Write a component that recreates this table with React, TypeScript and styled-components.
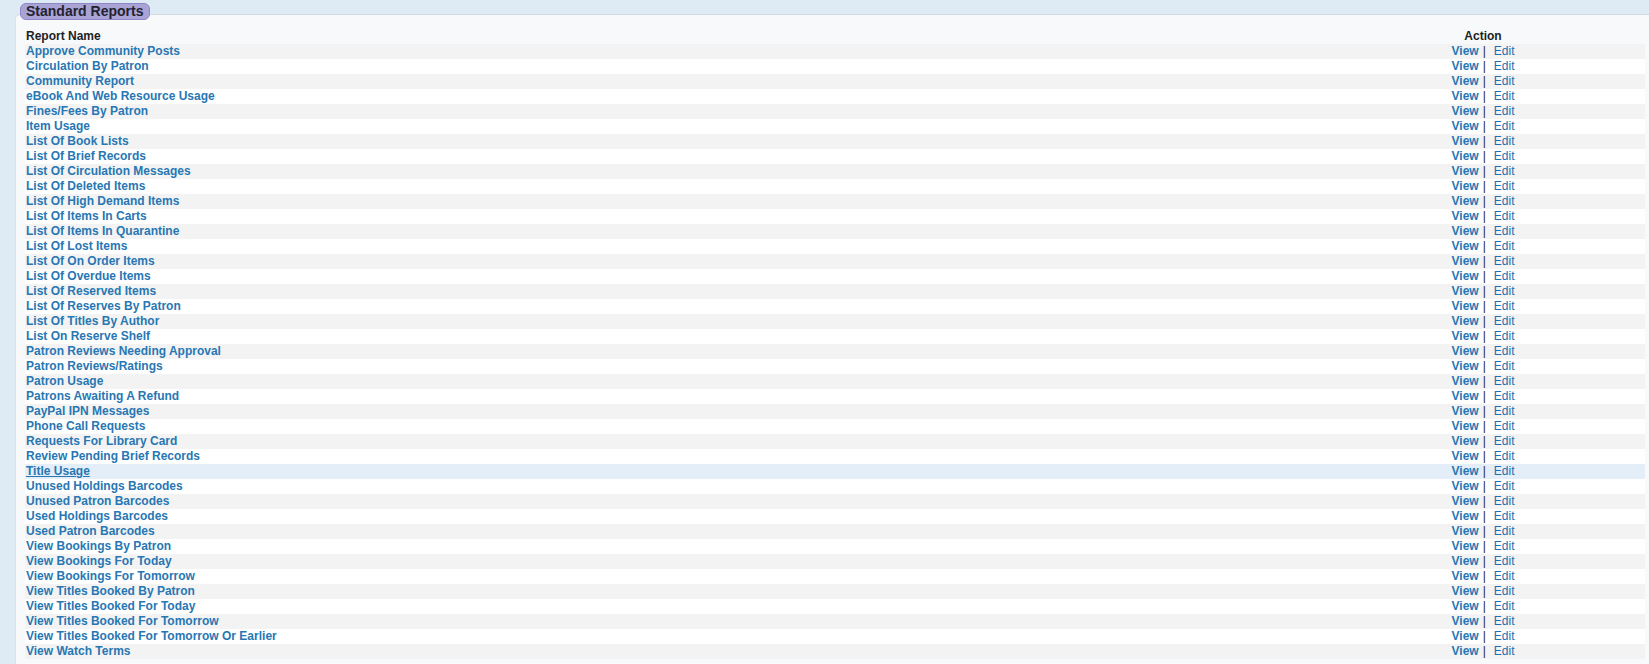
import styled, {createGlobalStyle} from "styled-components";

const GlobalStyle = createGlobalStyle`
  html, body {
    margin: 0;
    padding: 0;
    background: #deeaf4;
    font-family: "Liberation Sans", Arial, sans-serif;
    overflow: hidden;
  }
`

const reports = [
    "Approve Community Posts",
    "Circulation By Patron",
    "Community Report",
    "eBook And Web Resource Usage",
    "Fines/Fees By Patron",
    "Item Usage",
    "List Of Book Lists",
    "List Of Brief Records",
    "List Of Circulation Messages",
    "List Of Deleted Items",
    "List Of High Demand Items",
    "List Of Items In Carts",
    "List Of Items In Quarantine",
    "List Of Lost Items",
    "List Of On Order Items",
    "List Of Overdue Items",
    "List Of Reserved Items",
    "List Of Reserves By Patron",
    "List Of Titles By Author",
    "List On Reserve Shelf",
    "Patron Reviews Needing Approval",
    "Patron Reviews/Ratings",
    "Patron Usage",
    "Patrons Awaiting A Refund",
    "PayPal IPN Messages",
    "Phone Call Requests",
    "Requests For Library Card",
    "Review Pending Brief Records",
    "Title Usage",
    "Unused Holdings Barcodes",
    "Unused Patron Barcodes",
    "Used Holdings Barcodes",
    "Used Patron Barcodes",
    "View Bookings By Patron",
    "View Bookings For Today",
    "View Bookings For Tomorrow",
    "View Titles Booked By Patron",
    "View Titles Booked For Today",
    "View Titles Booked For Tomorrow",
    "View Titles Booked For Tomorrow Or Earlier",
    "View Watch Terms",
]

const Page = styled.div`
  padding: 3px 0 0 15px;
`
const Panel = styled.section`
  margin-top: 11px;
  min-height: 660px;
  box-sizing: border-box;
  background: #f7f9fb;
  border-top: 1px solid #d2d9e1;
  border-left: 1px solid #d9e1e9;
  border-top-left-radius: 5px;
  padding: 0 4px;
`
const Legend = styled.div`
  display: block;
  width: fit-content;
  margin-top: -12px;
  height: 17px;
  box-sizing: border-box;
  padding: 0 6px 0 5px;
  background: #a9a3d6;
  border: 1px solid #8d87c6;
  border-radius: 6px;
  color: #24222e;
  font-size: 14px;
  font-weight: bold;
  line-height: 15px;
`
const Table = styled.table`
  margin: 9px 0 0 5px;
  width: calc(100% - 5px);
  border-collapse: collapse;
  font-size: 12px;
  font-weight: bold;
`
const HeadCell = styled.th<{ $center?: boolean }>`
  height: 15px;
  padding: 0 1px;
  line-height: 15px;
  color: #1e1e24;
  text-align: ${props => props.$center ? "center" : "left"};
  width: ${props => props.$center ? "322px" : "auto"};
`
const Row = styled.tr<{ $active?: boolean, $odd?: boolean }>`
  background: ${props => props.$active ? "#e3eef8" : props.$odd ? "#f3f3f3" : "#ffffff"};
  a.name {
    text-decoration: ${props => props.$active ? "underline" : "none"};
  }
  &:hover {
    background: #e3eef8;
  }
`
const Cell = styled.td<{ $center?: boolean }>`
  height: 15px;
  padding: 0 1px;
  line-height: 15px;
  white-space: nowrap;
  text-align: ${props => props.$center ? "center" : "left"};
`
const Link = styled.a<{ $light?: boolean }>`
  color: ${props => props.$light ? "#1f6fae" : "#2877b3"};
  text-decoration: none;
  font-weight: ${props => props.$light ? "normal" : "bold"};
  cursor: pointer;
  &:hover {
    text-decoration: underline;
  }
`
const Sep = styled.span`
  color: #2a2a2a;
  font-weight: normal;
  margin: 0 8px 0 4px;
`

export default function App() {
    return (
        <Page>
            <GlobalStyle/>
            <Panel>
                <Legend>Standard Reports</Legend>
                <Table>
                    <thead>
                    <tr>
                        <HeadCell>Report Name</HeadCell>
                        <HeadCell $center>Action</HeadCell>
                    </tr>
                    </thead>
                    <tbody>
                    {reports.map((name, i) => (
                        <Row key={name} $odd={i % 2 === 0} $active={name === "Title Usage"}>
                            <Cell><Link className="name">{name}</Link></Cell>
                            <Cell $center>
                                <Link>View</Link>
                                <Sep>|</Sep>
                                <Link $light>Edit</Link>
                            </Cell>
                        </Row>
                    ))}
                    </tbody>
                </Table>
            </Panel>
        </Page>
    );
}
